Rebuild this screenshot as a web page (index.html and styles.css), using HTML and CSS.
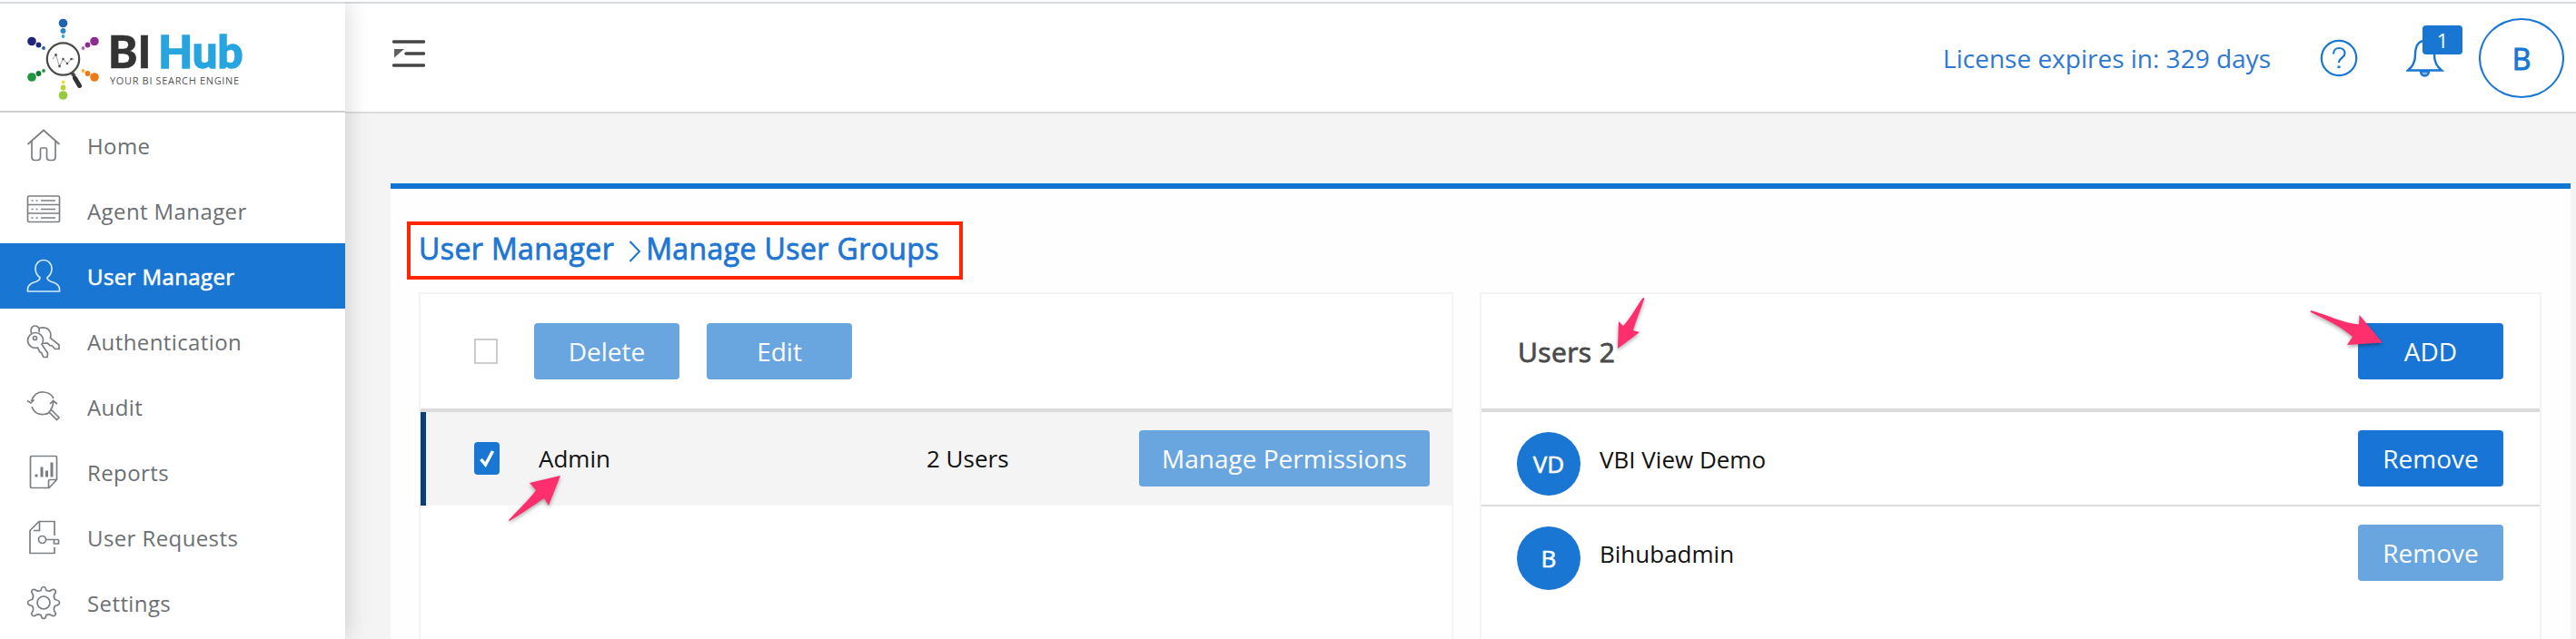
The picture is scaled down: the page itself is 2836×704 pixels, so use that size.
FILE: index.html
```html
<!DOCTYPE html>
<html lang="en">
<head>
<meta charset="utf-8">
<title>BI Hub - Manage User Groups</title>
<link rel="stylesheet" href="styles.css">
</head>
<body>
<div class="app">
  <aside class="sidebar">
    <div class="brand">
      <svg class="brand-mark" width="80" height="92" viewBox="0 0 80 92">
        <g fill="#1f62ae"><circle cx="39.5" cy="6.500" r="4.800"/><circle cx="39.500" cy="15" r="2.900" fill="#2b86c8"/><circle cx="39.500" cy="21" r="1.900" fill="#35a8e0"/></g>
        <g fill="#20267c"><circle cx="5" cy="26.500" r="4.800"/><circle cx="12.500" cy="30.500" r="2.900"/><circle cx="18" cy="34" r="1.900" fill="#2558a5"/></g>
        <g fill="#8d2b8f"><circle cx="74" cy="26.500" r="4.800"/><circle cx="66.500" cy="30.500" r="2.900"/><circle cx="61.500" cy="34" r="1.900" fill="#b06ab5"/></g>
        <g fill="#22953f"><circle cx="5" cy="66" r="4.800"/><circle cx="12.500" cy="62" r="2.900" fill="#0b7a33"/><circle cx="18" cy="59" r="1.900"/></g>
        <g fill="#ee7a14"><circle cx="74" cy="66" r="4.800"/><circle cx="66.500" cy="62" r="2.900"/><circle cx="61.500" cy="59" r="1.900" fill="#f9b233"/></g>
        <g fill="#97c93c"><circle cx="39.500" cy="86" r="4.800"/><circle cx="39.500" cy="77.500" r="2.900" fill="#b5d334"/><circle cx="39.500" cy="71.500" r="1.900" fill="#e5e030"/></g>
        <circle cx="39.500" cy="46" r="17.700" fill="none" stroke="#4a4a4a" stroke-width="2.200"/>
        <path d="M49 61l3 4" stroke="#4a4a4a" stroke-width="4"/>
        <path d="M52.500 67l5 8.500" stroke="#333" stroke-width="5" stroke-linecap="round"/>
        <path d="M28 46l3.500-4.500 4 12.500 4-8 4.500 5 4.500-5h3" fill="none" stroke="#999" stroke-width="1"/>
        <g fill="#555"><circle cx="31.500" cy="41.500" r="1.400"/><circle cx="35.500" cy="54" r="1.400"/><circle cx="39.500" cy="46" r="1.300"/><circle cx="44" cy="51" r="1.300"/><circle cx="48.500" cy="46" r="1.300"/></g>
      </svg>
      <div class="brand-text">
        <div class="brand-name"><span class="brand-bi">BI</span><span class="brand-hub">Hub</span></div>
        <div class="brand-tag">YOUR BI SEARCH ENGINE</div>
      </div>
    </div>
    <nav class="nav">
      <a class="nav-item"><svg class="icon" viewBox="0 0 38 38"><path d="M1.500 18L19 2.500 36.500 18M6 14.500V32c0 2 1 3.500 3 3.500h3.500c2 0 3-1.500 3-3.500v-8.500c0-1 .5-1.500 1.500-1.500h4c1 0 1.500.5 1.500 1.500V32c0 2 1 3.500 3 3.500H29c2 0 3-1.500 3-3.500V14.500"/></svg><span>Home</span></a>
      <a class="nav-item"><svg class="icon" viewBox="0 0 38 38"><rect x="1.500" y="3" width="35" height="28.500" rx="1.500"/><path d="M1.500 12.500h35M1.500 22h35M16 8h16M16 17.500h16M16 27h16M5.500 8h2M10.500 8h2M5.500 17.500h2M10.500 17.500h2M5.500 27h2M10.500 27h2"/></svg><span>Agent Manager</span></a>
      <a class="nav-item active"><svg class="icon" viewBox="0 0 38 38"><path d="M15 21c-3-2.500-5-6-5-10 0-5.500 4-9.500 9-9.500s9 4 9 9.500c0 4-2 7.500-5 10 0 2.500 2 3.500 5 4.500 5 1.500 8.500 4 8.500 8v2.500h-35V33.500c0-4 3.500-6.500 8.500-8 3-1 5-2 5-4.500z"/></svg><span>User Manager</span></a>
      <a class="nav-item"><svg class="icon" viewBox="0 0 38 38"><path d="M10 9.500c4.500 0 8.500 3.500 8.500 8 0 2-.5 3.500-1.500 5l6.500 9.500-.5 4.500h-4l-2.500-5-1.500-.5-2.500-5c-6 1.500-11-2.500-11-8 0-4.500 4-8.500 8.500-8.500z"/><circle cx="9.500" cy="15.500" r="2"/><path d="M5.500 10.500C4 6 6 2 9.500 2s5.500 3 4.500 7M14 4.500c5.500-1.500 10.500 0 12.500 5 .6 2 .4 4 0 6l9.500 7.500v4.500h-4.500l-3-3.500-2.500-.5-3-2.500-5 .5"/></svg><span>Authentication</span></a>
      <a class="nav-item"><svg class="icon" viewBox="0 0 38 38"><path d="M5.500 13C8 6 13 2.500 19 3c5 .3 9 3 11 7M1 12.500l4 2.500 3.500-3.500M6 19c2 6 7 9 13 8.500 3 0 5-1 7-2.500M26 16l3.500-3.500L34 16M29.500 13.500c0 4-1 7-3 9M27.500 22.500l8.500 8.500-2.500 2.500-8.500-8.500z"/></svg><span>Audit</span></a>
      <a class="nav-item"><svg class="icon" viewBox="0 0 38 38"><path d="M6 1.500h26c1 0 1.500.5 1.500 1.500v24.500L25 36.500H6c-1 0-1.500-.5-1.500-1.500V3c0-1 .5-1.500 1.500-1.500zM24.500 36V29c0-1 .5-1.500 1.500-1.500h7.500"/><path d="M11 21.500v3M17 13.500v11M22.500 17.500v7M28 8.500v16" stroke-width="3"/></svg><span>Reports</span></a>
      <a class="nav-item"><svg class="icon" viewBox="0 0 38 38"><path d="M31 17V1.500H14L4 11.500v25h27V30M14.500 2v9.500H8M21.500 21.500h14M30.500 21.500v4.500h5v-4.500"/><circle cx="17.500" cy="21.500" r="4"/></svg><span>User Requests</span></a>
      <a class="nav-item"><svg class="icon" viewBox="0 0 38 38"><circle cx="19" cy="19" r="7"/><path d="M16 5.500c.5-2.500 1.500-4 3-4s2.500 1.500 3 4c2 .8 3.500 1.200 5 0 2-1.500 3.500-1.500 4.500-.5s1 3-.5 4.500c-1 1.800-.8 4 .5 6 2.500.5 5 1.500 5 3.500s-2.500 3-5 3.500c-1.300 2-1.500 4-.5 6 1.500 1.500 1.500 3.500.5 4.500s-2.500 1-4.500-.5c-1.500-1.200-3-.8-5 0-.5 2.500-1.500 4-3 4s-2.500-1.500-3-4c-2-.8-3.500-1.200-5 0-2 1.500-3.500 1.500-4.500.5s-1-3 .5-4.500c1-2 .8-4-.5-6-2.500-.5-5-1.500-5-3.500s2.500-3 5-3.500c1.300-2 1.500-4.200.5-6C5.500 8 5.500 6 6.500 5s2.500-1 4.500.5c1.500 1.200 3 .8 5 0z"/></svg><span>Settings</span></a>
    </nav>
  </aside>

  <div class="page">
    <header class="topbar">
      <svg class="menu-toggle" width="36" height="32" viewBox="0 0 36 32"><path d="M1.500 3h33M15 16h19.500M1.500 29h33" stroke="#454545" stroke-width="3.500" stroke-linecap="round"/><path d="M2 11h11L2 20.500z" fill="#606060"/></svg>
      <div class="topbar-right">
        <span class="license">License expires in: 329 days</span>
        <span class="help"><svg width="42" height="42" viewBox="0 0 42 42"><circle cx="21" cy="21" r="19.200"/><path d="M15 16.500c0-4 2.500-6.500 6.200-6.500 3.600 0 6.300 2.300 6.300 5.700 0 5-6.500 4.800-6.500 10.300"/><path d="M21 29.500v2.500" stroke-width="3"/></svg></span>
        <span class="bell">
          <svg width="42" height="44" viewBox="0 0 42 44"><path d="M2 35.500c5-4 8-9 8-17C10 8 14 3 20.500 3S31 8 31 18.500c0 8 3 13 8 17z"/><path d="M16 36.500c0 3 2 5 4.500 5s4.500-2 4.500-5z" fill="#8bbbe9"/></svg>
          <span class="badge">1</span>
        </span>
        <span class="account">B</span>
      </div>
    </header>

    <main class="content">
      <section class="card">
        <h1 class="crumbs"><span>User Manager</span><svg width="14" height="26" viewBox="0 0 14 26"><path d="M1.500 2l10.500 11L1.500 24"/></svg><span>Manage User Groups</span></h1>
        <div class="panels">
          <div class="panel groups">
            <div class="panel-head">
              <span class="check"></span>
              <button class="btn soft">Delete</button>
              <button class="btn soft edit">Edit</button>
            </div>
            <div class="group-row">
              <span class="check checked"><svg width="18" height="22" viewBox="0 0 18 22"><path d="M2.500 12l5 6L15.500 3"/></svg></span>
              <span class="group-name">Admin</span>
              <span class="group-count">2 Users</span>
              <button class="btn soft wide">Manage Permissions</button>
              <svg class="arrow arrow-admin" width="66" height="56" viewBox="0 0 66 56"><path d="M61 4L27 12l7 8C26 31 14 42 4 53l1 1C16 47 30 38 43 29l5 8z"/></svg>
            </div>
          </div>
          <div class="panel users">
            <div class="panel-head">
              <h2 class="users-title">Users 2</h2>
              <button class="btn">ADD</button>
              <svg class="arrow arrow-users" width="42" height="66" viewBox="0 0 42 66"><path d="M5 60L6 30l5 5C18 28 25 15 32 5c1-2 3-1 2 1-4 12-9 23-12 34l7 2z"/></svg>
              <svg class="arrow arrow-add" width="90" height="48" viewBox="0 0 90 48"><path d="M83 38.500L57.500 8l-.5 10.500C40 17 22 8 6 3.500c-3-1-3 1-1 2C20 13 36 20 50 32l-6 9z"/></svg>
            </div>
            <div class="user-row"><span class="avatar">VD</span><span class="user-name">VBI View Demo</span><button class="btn">Remove</button></div>
            <div class="user-row"><span class="avatar">B</span><span class="user-name">Bihubadmin</span><button class="btn soft">Remove</button></div>
          </div>
        </div>
      </section>
    </main>
  </div>
</div>
</body>
</html>
```
FILE: styles.css
```css
* { box-sizing: border-box; }
body { margin: 0; background: #f4f4f4; font-family: "Open Sans", sans-serif; color: #111; }
.app { display: flex; width: 2836px; height: 704px; overflow: hidden; border-top: 2px solid #fdfdfd; }

/* Sidebar */
.sidebar { width: 380px; flex: none; background: #fff; position: relative; z-index: 1; box-shadow: 0 0 26px rgba(0, 0, 0, .18); border-top: 2px solid #d8dbde; }
.brand { height: 120px; border-bottom: 2px solid #cfcfcf; display: flex; padding: 15px 0 0 30px; }
.brand-text { margin-left: 9px; padding-top: 8px; }
.brand-name { display: flex; font-family: Lato, sans-serif; font-weight: 900; font-size: 49px; line-height: 58px; }
.brand-bi { color: #333; margin-right: 8px; -webkit-text-stroke: .6px #333; }
.brand-hub { color: #27a5e0; -webkit-text-stroke: 1.4px #27a5e0; }
.brand-tag { margin: -3px 0 0 2px; font-size: 11px; line-height: 14px; letter-spacing: .65px; color: #555; white-space: nowrap; }
.nav-item { display: flex; align-items: center; height: 72px; padding-left: 29px; font-size: 24px; letter-spacing: .4px; color: #6c6f73; }
.nav-item .icon { width: 38px; height: 38px; margin-right: 29px; fill: none; stroke: #7c7f82; stroke-width: 1.7; }
.nav-item.active { background: #1976d2; color: #fff; -webkit-text-stroke: .6px #fff; }
.nav-item.active .icon { stroke: #d5e8fa; }

/* Top bar */
.page { flex: 1; min-width: 0; }
.topbar { height: 123px; background: #fff; border-top: 2px solid #d8dbde; border-bottom: 2px solid #dcdcdc; display: flex; justify-content: space-between; padding: 16px 13px 0 52px; }
.menu-toggle { margin-top: 23px; }
.topbar-right { display: flex; align-items: center; height: 88px; color: #1976d2; }
.license { font-size: 28px; margin: -1px 54px 0 0; color: #2f78cf; }
.help { width: 42px; height: 42px; margin-right: 53px; }
.help svg { display: block; fill: none; stroke: #1976d2; stroke-width: 2.2; }
.bell { position: relative; width: 42px; height: 44px; margin-right: 38px; }
.bell svg { display: block; fill: none; stroke: #1976d2; stroke-width: 2.4; }
.badge { position: absolute; left: 18px; top: -14px; width: 44px; height: 32px; border-radius: 4px; background: #1976d2; color: #fff; font-size: 22px; line-height: 32px; text-align: center; }
.account { width: 94px; height: 88px; border: 2px solid #1976d2; border-radius: 50%; display: grid; place-items: center; font-size: 32px; -webkit-text-stroke: 1px #1976d2; }

/* Card */
.content { padding: 77px 6px 0 50px; }
.card { height: 520px; background: #fefefe; border-top: 6px solid #1274d3; padding: 36px 32px 0 18px; }
.crumbs { display: flex; align-items: center; width: 612px; height: 64px; border: 4px solid #ff2600; margin: 0; padding: 0 0 5px 9px; font-size: 32px; font-weight: 400; letter-spacing: .4px; color: #1f76d2; white-space: nowrap; -webkit-text-stroke: .8px #1f76d2; }
.crumbs svg { margin: 7px 5px 0 16px; fill: none; stroke: #1976d2; stroke-width: 2; }
.panels { display: flex; justify-content: space-between; margin: 14px 0 0 13px; }
.panel { height: 400px; border: 2px solid #f3f3f3; background: #fff; }
.groups { width: 1139px; }
.users { width: 1169px; }
.panel-head { position: relative; display: flex; align-items: center; height: 130px; border-bottom: 4px solid #dcdcdc; }
.groups .panel-head { padding-left: 59px; }
.users .panel-head { padding: 0 40px 0 39px; justify-content: space-between; }
.users-title { margin: 0; font-size: 30px; font-weight: 400; letter-spacing: .4px; color: #4a4a4a; padding-left: 1px; -webkit-text-stroke: .8px #4a4a4a; }
.btn { width: 160px; height: 62px; border: 0; border-radius: 4px; background: #1875d6; color: #fff; font: 400 28px "Open Sans", sans-serif; padding: 0; }
.btn.soft { background: #69a6e0; }
.btn.wide { width: 320px; }
.btn.edit { margin-left: 30px; }
.check { flex: none; width: 26px; height: 28px; border: 2px solid #ccc; background: #fff; margin-right: 40px; }
.checked { display: grid; place-items: center; width: 28px; height: 36px; border: 0; border-radius: 4px; background: #1976d2; margin-right: 43px; }
.checked svg { fill: none; stroke: #fff; stroke-width: 3.5; }
.group-row { position: relative; display: flex; align-items: center; height: 103px; padding: 0 24px 2px 53px; background: #f4f4f4; border-left: 6px solid #0a4078; font-size: 26px; }
.group-name, .group-count { padding-top: 1px; }
.group-name { width: 427px; }
.group-count { flex: 1; }
.user-row { display: flex; height: 104px; padding: 20px 40px 0 39px; border-bottom: 2px solid #dcdcdc; font-size: 26px; }
.user-row:last-child { border: 0; }
.avatar { width: 70px; height: 70px; margin-top: 2px; border-radius: 50%; background: #1976d2; color: #fff; display: grid; place-items: center; font-size: 26px; -webkit-text-stroke: .6px #fff; }
.user-name { flex: 1; margin-left: 21px; line-height: 64px; }

/* Callout arrows */
.arrow { position: absolute; fill: #ff2e6c; filter: drop-shadow(0 2px 2px rgba(0, 0, 0, .35)); }
.arrow-admin { left: 87px; top: 66px; }
.arrow-users { left: 145px; top: 0; }
.arrow-add { left: 909px; top: 15px; }
```
